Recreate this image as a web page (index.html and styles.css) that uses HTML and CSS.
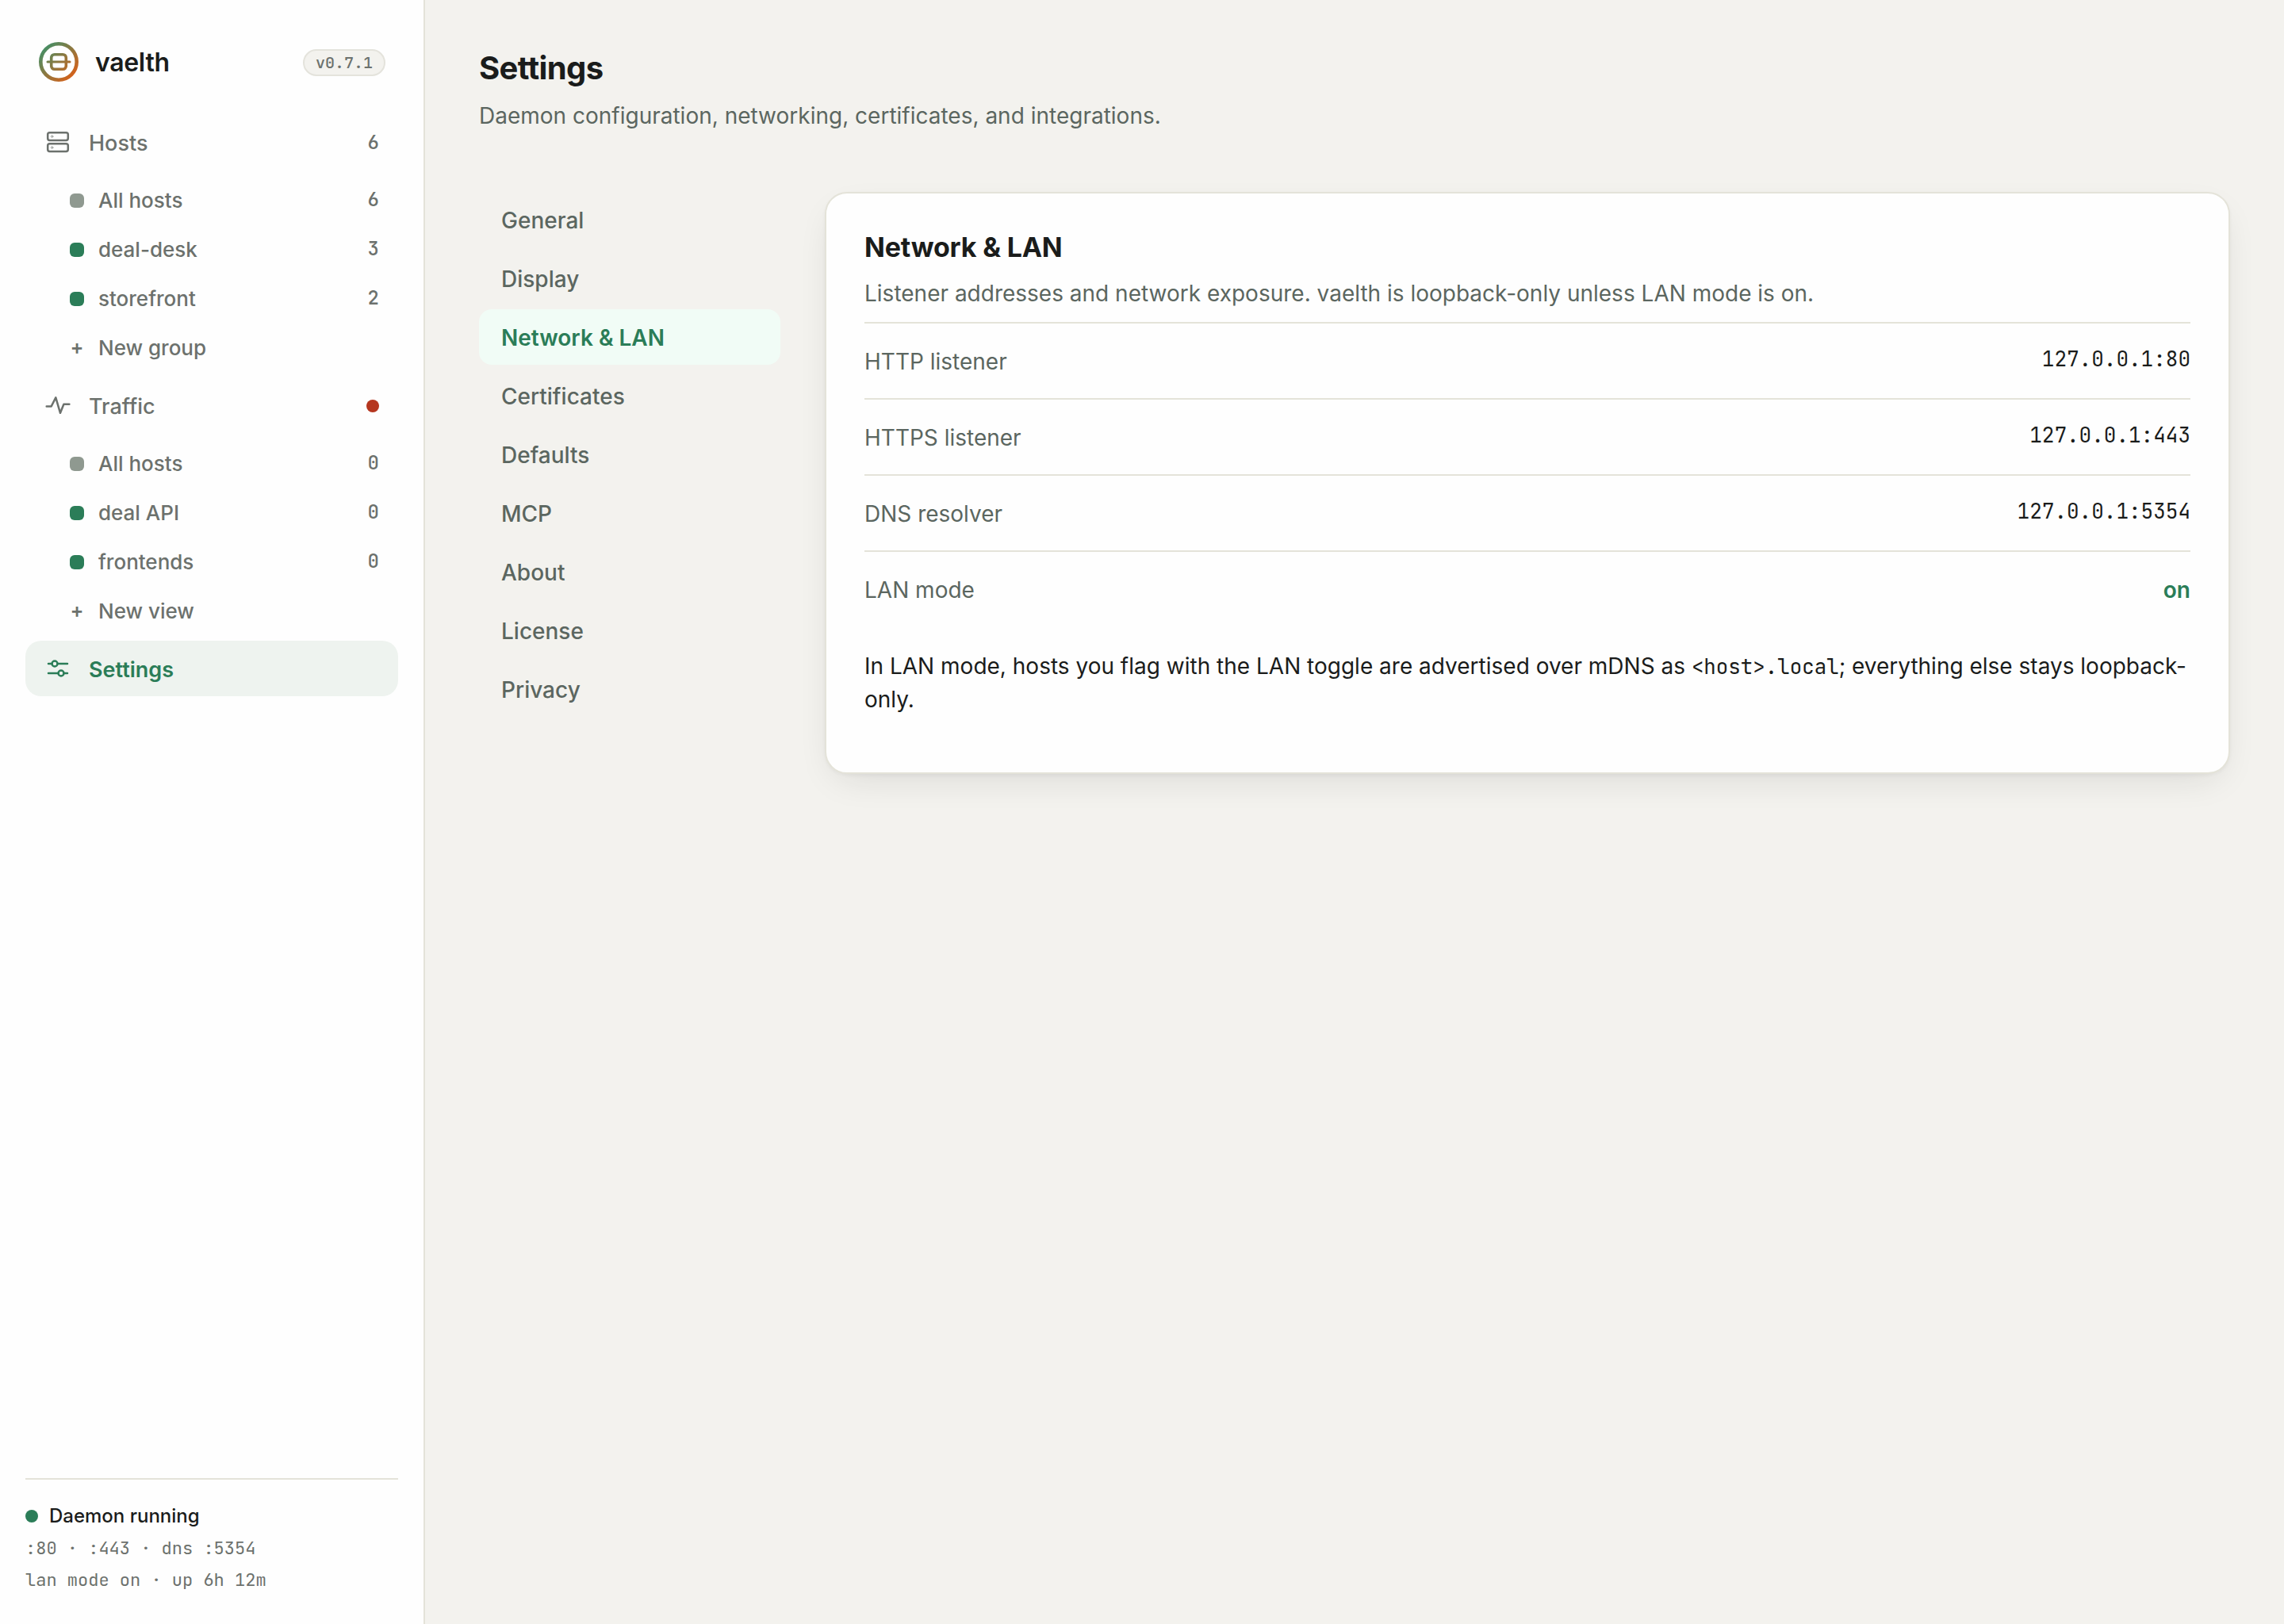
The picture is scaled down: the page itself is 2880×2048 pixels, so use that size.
FILE: index.html
```html
<!DOCTYPE html>
<html lang="en">
<head>
   <meta charset="utf-8">
   <title>vaelth - Settings</title>
   <link rel="stylesheet" href="styles.css">
</head>
<body>

   <aside class="sidebar">
      <div class="brand">
         <svg class="logo" viewBox="0 0 56 56" fill="none" stroke="url(#ring)">
            <defs>
               <linearGradient id="ring" gradientUnits="userSpaceOnUse" x1="8" y1="8" x2="48" y2="48">
                  <stop offset="0" stop-color="#3f9068"/>
                  <stop offset="1" stop-color="#dd5f16"/>
               </linearGradient>
            </defs>
            <circle cx="28" cy="28" r="22.7" stroke-width="4.6"/>
            <rect x="18.7" y="18.7" width="18.6" height="18.6" rx="4" stroke-width="3.6"/>
            <path d="M14 28h28.01" stroke-width="3" stroke-linecap="round"/>
         </svg>
         <span class="brand-name">vaelth</span>
         <span class="version">v0.7.1</span>
      </div>

      <nav class="menu">
         <a class="item">
            <svg class="icon" viewBox="0 0 34 34">
               <rect x="4.2" y="5.2" width="25.6" height="9.8" rx="2.4"/>
               <rect x="4.2" y="19.2" width="25.6" height="9.8" rx="2.4"/>
               <circle class="led" cx="9.6" cy="10.1" r="1.2"/>
               <circle class="led" cx="9.6" cy="24.1" r="1.2"/>
            </svg>
            <span class="label">Hosts</span>
            <span class="count">6</span>
         </a>
         <div class="sub">
            <a class="sub-item"><i class="dot gray"></i>All hosts<span class="count">6</span></a>
            <a class="sub-item"><i class="dot"></i>deal-desk<span class="count">3</span></a>
            <a class="sub-item"><i class="dot"></i>storefront<span class="count">2</span></a>
            <a class="sub-item"><span class="plus">+</span>New group</a>
         </div>

         <a class="item">
            <svg class="icon" viewBox="0 0 34 34">
               <path d="M2.7 18.4h6l5.6-11 5.7 19.4 4.4-11.1h7"/>
            </svg>
            <span class="label">Traffic</span>
            <span class="live"></span>
         </a>
         <div class="sub">
            <a class="sub-item"><i class="dot gray"></i>All hosts<span class="count">0</span></a>
            <a class="sub-item"><i class="dot"></i>deal API<span class="count">0</span></a>
            <a class="sub-item"><i class="dot"></i>frontends<span class="count">0</span></a>
            <a class="sub-item"><span class="plus">+</span>New view</a>
         </div>

         <a class="item active">
            <svg class="icon" viewBox="0 0 34 34">
               <path d="M5 11h4.5M16.5 11h12.5M5 23h12.5M24.5 23h4.5"/>
               <circle cx="13" cy="11" r="3.5"/>
               <circle cx="21" cy="23" r="3.5"/>
            </svg>
            <span class="label">Settings</span>
         </a>
      </nav>

      <footer class="status">
         <div class="status-title"><span class="status-dot"></span>Daemon running</div>
         <div class="status-line">:80 · :443 · dns :5354</div>
         <div class="status-line">lan mode on · up 6h 12m</div>
      </footer>
   </aside>

   <main class="main">
      <h1>Settings</h1>
      <p class="lead">Daemon configuration, networking, certificates, and integrations.</p>

      <div class="settings">
         <nav class="tabs">
            <a class="tab">General</a>
            <a class="tab">Display</a>
            <a class="tab selected">Network &amp; LAN</a>
            <a class="tab">Certificates</a>
            <a class="tab">Defaults</a>
            <a class="tab">MCP</a>
            <a class="tab">About</a>
            <a class="tab">License</a>
            <a class="tab">Privacy</a>
         </nav>

         <section class="card">
            <h2>Network &amp; LAN</h2>
            <p class="desc">Listener addresses and network exposure. vaelth is loopback-only unless LAN mode is on.</p>
            <div class="row"><span>HTTP listener</span><code>127.0.0.1:80</code></div>
            <div class="row"><span>HTTPS listener</span><code>127.0.0.1:443</code></div>
            <div class="row"><span>DNS resolver</span><code>127.0.0.1:5354</code></div>
            <div class="row"><span>LAN mode</span><b class="on">on</b></div>
            <p class="note">In LAN mode, hosts you flag with the LAN toggle are advertised over mDNS as <code>&lt;host&gt;.local</code>; everything else stays loopback-only.</p>
         </section>
      </div>
   </main>

</body>
</html>
```
FILE: styles.css
```css
* {
   box-sizing: border-box;
}

body {
   margin: 0;
   display: flex;
   height: 2048px;
   background: #f3f2ee;
   color: #1a1c1b;
   font-family: Inter, "Liberation Sans", sans-serif;
   font-size: 28px;
   line-height: 42px;
}

h1, h2, p {
   margin: 0;
}

code, .count, .version, .status-line, .plus {
   font-family: "JetBrains Mono", "DejaVu Sans Mono", monospace;
}

/* sidebar */
.sidebar {
   width: 536px;
   flex: none;
   display: flex;
   flex-direction: column;
   padding: 50px 32px 35px;
   background: #fefefe;
   border-right: 2px solid #e4e3d9;
}

.brand {
   display: flex;
   align-items: center;
   height: 56px;
   padding: 0 16px 0 14px;
}

.logo {
   width: 56px;
   height: 56px;
}

.brand-name {
   margin-left: 18px;
   padding-top: 2px;
   font-size: 32px;
   font-weight: 600;
   letter-spacing: -0.32px;
}

.version {
   margin-left: auto;
   margin-top: 2px;
   height: 34px;
   padding: 0 14px;
   border: 2px solid #e4e3dc;
   border-radius: 17px;
   background: #f3f2ee;
   color: #6c716d;
   font-size: 20px;
   font-weight: 500;
   line-height: 30px;
}

.menu {
   margin-top: 38px;
}

.item {
   display: flex;
   align-items: center;
   height: 70px;
   padding: 0 24px;
   border-radius: 20px;
   color: #6c716d;
   font-size: 27px;
   font-weight: 500;
}

.item.active {
   background: #eef3ef;
   color: #2b7d58;
   font-weight: 600;
}

.label {
   padding-top: 4px;
}

.icon {
   width: 34px;
   height: 34px;
   margin-right: 22px;
   fill: none;
   stroke: currentColor;
   stroke-width: 2.5;
   stroke-linecap: round;
   stroke-linejoin: round;
}

.led {
   stroke-width: 0.7;
}

.sub {
   padding: 8px 24px 6px 56px;
}

.sub-item {
   display: flex;
   align-items: center;
   height: 62px;
   color: #6c716d;
   font-size: 26px;
   font-weight: 500;
}

.dot {
   width: 18px;
   height: 18px;
   margin-right: 18px;
   border-radius: 6px;
   background: #2b7d58;
}

.dot.gray {
   background: #8f9990;
}

.plus {
   width: 18px;
   margin-right: 18px;
   font-size: 26px;
   text-align: center;
}

.count {
   margin-left: auto;
   font-size: 24px;
   padding-bottom: 2px;
}

.item .count {
   padding: 2px 0 0;
}

.live {
   width: 16px;
   height: 16px;
   margin-left: auto;
   margin-top: 2px;
   border-radius: 50%;
   background: #b5361f;
}

.status {
   margin-top: auto;
   padding-top: 26px;
   border-top: 2px solid #e4e3d9;
}

.status-title {
   display: flex;
   align-items: center;
   height: 40px;
   margin-bottom: 1px;
   font-size: 24px;
   font-weight: 500;
}

.status-dot {
   width: 16px;
   height: 16px;
   margin-right: 14px;
   border-radius: 50%;
   background: #2b7d58;
}

.status-line {
   color: #6c716d;
   font-size: 22px;
   line-height: 40px;
}

/* main column */
.main {
   flex: 1;
   padding: 56px 68px;
}

h1 {
   font-size: 40px;
   font-weight: 700;
   line-height: 60px;
   letter-spacing: -0.6px;
}

.lead {
   margin-top: 9px;
   color: #5b6660;
}

.settings {
   display: flex;
   align-items: flex-start;
   gap: 56px;
   margin-top: 75px;
}

.tabs {
   width: 380px;
   flex: none;
   display: flex;
   flex-direction: column;
   gap: 4px;
}

.tab {
   height: 70px;
   padding: 0 28px;
   border-radius: 16px;
   color: #5b6660;
   font-weight: 500;
   line-height: 72px;
}

.tab.selected {
   background: #f1fcf6;
   color: #2b7d58;
   font-weight: 600;
}

.card {
   flex: 1;
   height: 734px;
   padding: 42px 48px;
   border: 2px solid #e4e3d9;
   border-radius: 28px;
   background: #fefefe;
   box-shadow: 0 2px 4px rgba(26, 28, 27, 0.04), 0 16px 48px -16px rgba(26, 28, 27, 0.14);
}

h2 {
   font-size: 34px;
   font-weight: 700;
   line-height: 51px;
   letter-spacing: -0.2px;
}

.desc {
   margin: 12px 0 15px;
   color: #5b6660;
}

.row {
   display: flex;
   justify-content: space-between;
   height: 96px;
   padding-top: 27px;
   border-top: 2px solid #e4e3d9;
   color: #5b6660;
}

.row code {
   color: #1a1c1b;
   font-size: 26px;
   line-height: 36px;
}

.on {
   color: #2b7d58;
   font-weight: 600;
}

.note {
   margin-top: 29px;
}

.note code {
   font-size: 25.8px;
   line-height: 30px;
}
```
